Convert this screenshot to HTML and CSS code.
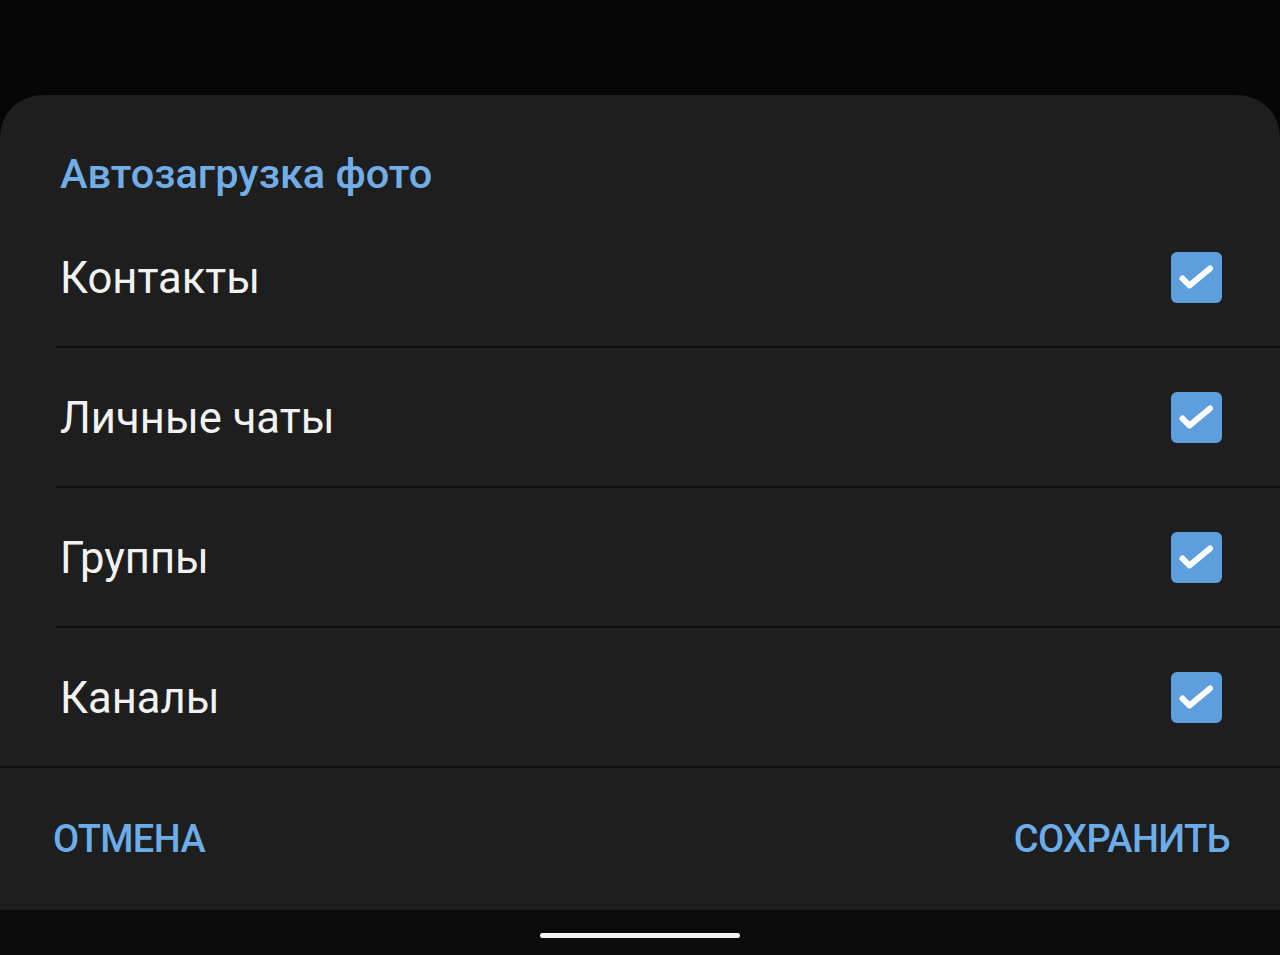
FILE: index.html
```html
<!DOCTYPE html>
<html>
<head>
	<meta charset="utf-8">
	<title>Автозагрузка фото</title>
	<link rel="stylesheet" href="styles.css">
</head>
<body>
	<div class="top"></div>
	<div class="sheet">
		<h2 class="title">Автозагрузка фото</h2>
		<div class="list">
			<div class="row">
				<span>Контакты</span>
				<span class="box"><svg viewBox="0 0 51 51"><path d="M11.5 26.5 L18.5 33.5 L39 16.5"/></svg></span>
			</div>
			<div class="row">
				<span>Личные чаты</span>
				<span class="box"><svg viewBox="0 0 51 51"><path d="M11.5 26.5 L18.5 33.5 L39 16.5"/></svg></span>
			</div>
			<div class="row">
				<span>Группы</span>
				<span class="box"><svg viewBox="0 0 51 51"><path d="M11.5 26.5 L18.5 33.5 L39 16.5"/></svg></span>
			</div>
			<div class="row">
				<span>Каналы</span>
				<span class="box"><svg viewBox="0 0 51 51"><path d="M11.5 26.5 L18.5 33.5 L39 16.5"/></svg></span>
			</div>
		</div>
		<div class="buttons">
			<button>Отмена</button>
			<button>Сохранить</button>
		</div>
	</div>
	<div class="navbar"><div class="handle"></div></div>
</body>
</html>
```

FILE: styles.css
```css
body{margin: 0;background-color: #060606;font-family: Roboto, 'Noto Sans', sans-serif;color: #f2f2f2;}
.top{height: 95px;}
.sheet{height: 815px;background-color: #1e1e1e;border-radius: 42px 42px 0 0;display: flex;flex-direction: column;}
.title{margin: 0;padding: 50px 60px 5px;line-height: 58px;font-size: 41.5px;font-weight: 500;color: #71aee8;}
.list{border-bottom: 2px solid #0e0e0e;}
.row{height: 138px;margin-left: 56px;padding: 0 58px 0 4px;display: flex;align-items: center;justify-content: space-between;border-bottom: 2px solid #0e0e0e;font-size: 43.6px;}
.row span:first-child{padding-top: 2px;}
.row:last-child{border-bottom: none;}
.box{width: 51px;height: 51px;border-radius: 6px;background-color: #5d9fdd;display: flex;}
.box svg{width: 51px;height: 51px;fill: none;stroke: #fff;stroke-width: 6;stroke-linecap: round;stroke-linejoin: round;}
.buttons{flex: 1;display: flex;align-items: center;justify-content: space-between;padding: 0 50px 0 53px;}
.buttons button{background: none;border: none;padding: 0;font-family: Roboto, sans-serif;font-size: 38px;letter-spacing: -0.6px;font-weight: 500;color: #6cade9;text-transform: uppercase;}
.navbar{height: 45px;background-color: #0b0b0b;display: flex;justify-content: center;padding-top: 23px;box-sizing: border-box;}
.handle{width: 200px;height: 5px;border-radius: 3px;background-color: #f4f4f4;}
```
